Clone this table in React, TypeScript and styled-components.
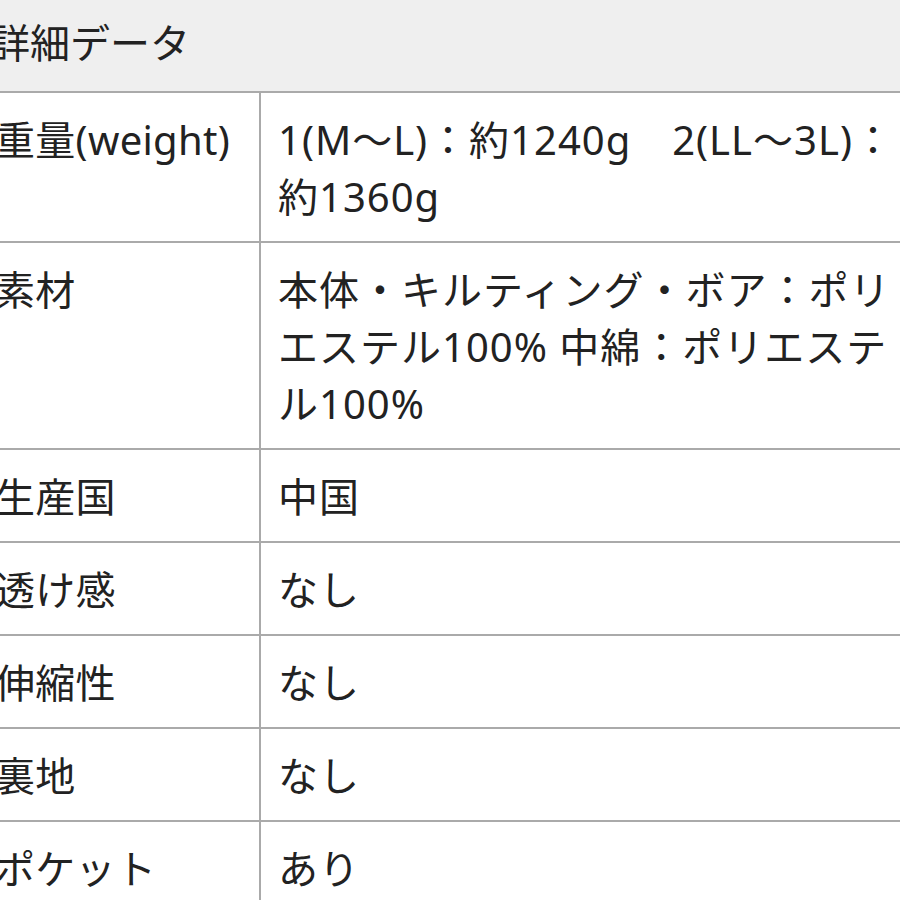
import React from "react";
import styled, { createGlobalStyle } from "styled-components";

interface Spec {
  label: string;
  value: string;
}

const specs: Spec[] = [
  { label: "重量(weight)", value: "1(M〜L)：約1240g　2(LL〜3L)：約1360g" },
  {
    label: "素材",
    value: "本体・キルティング・ボア：ポリエステル100% 中綿：ポリエステル100%",
  },
  { label: "生産国", value: "中国" },
  { label: "透け感", value: "なし" },
  { label: "伸縮性", value: "なし" },
  { label: "裏地", value: "なし" },
  { label: "ポケット", value: "あり" },
];

const GlobalStyle = createGlobalStyle`
  html, body {
    margin: 0;
    padding: 0;
    background: #ffffff;
    overflow: hidden;
  }
  body {
    font-family: "Noto Sans", "Noto Sans CJK JP", sans-serif;
    font-weight: 380;
    color: #222222;
  }
`;

const Page = styled.div`
  width: 946px;
  margin-left: -18px;
`;

const Heading = styled.div`
  background: #efefef;
  padding: 14px 8px 20px;
  font-size: 40px;
  line-height: 57px;
  white-space: nowrap;
  border-bottom: 2px solid #aaaaaa;
`;

const Table = styled.div`
  display: grid;
  grid-template-columns: 279px 1fr;
`;

const Label = styled.div`
  padding: 18px 12px 16px 13px;
  font-size: 40px;
  line-height: 57px;
  letter-spacing: 0.3px;
  border-right: 2px solid #aaaaaa;
  border-bottom: 2px solid #aaaaaa;
  white-space: nowrap;
`;

const Value = styled.div`
  padding: 18px 18px 16px 17px;
  font-size: 40px;
  line-height: 57px;
  letter-spacing: 1px;
  border-bottom: 2px solid #aaaaaa;
`;

export default function App() {
  return (
    <>
      <GlobalStyle />
      <Page>
        <Heading>詳細データ</Heading>
        <Table>
          {specs.map((s) => (
            <React.Fragment key={s.label}>
              <Label>{s.label}</Label>
              <Value>{s.value}</Value>
            </React.Fragment>
          ))}
        </Table>
      </Page>
    </>
  );
}
